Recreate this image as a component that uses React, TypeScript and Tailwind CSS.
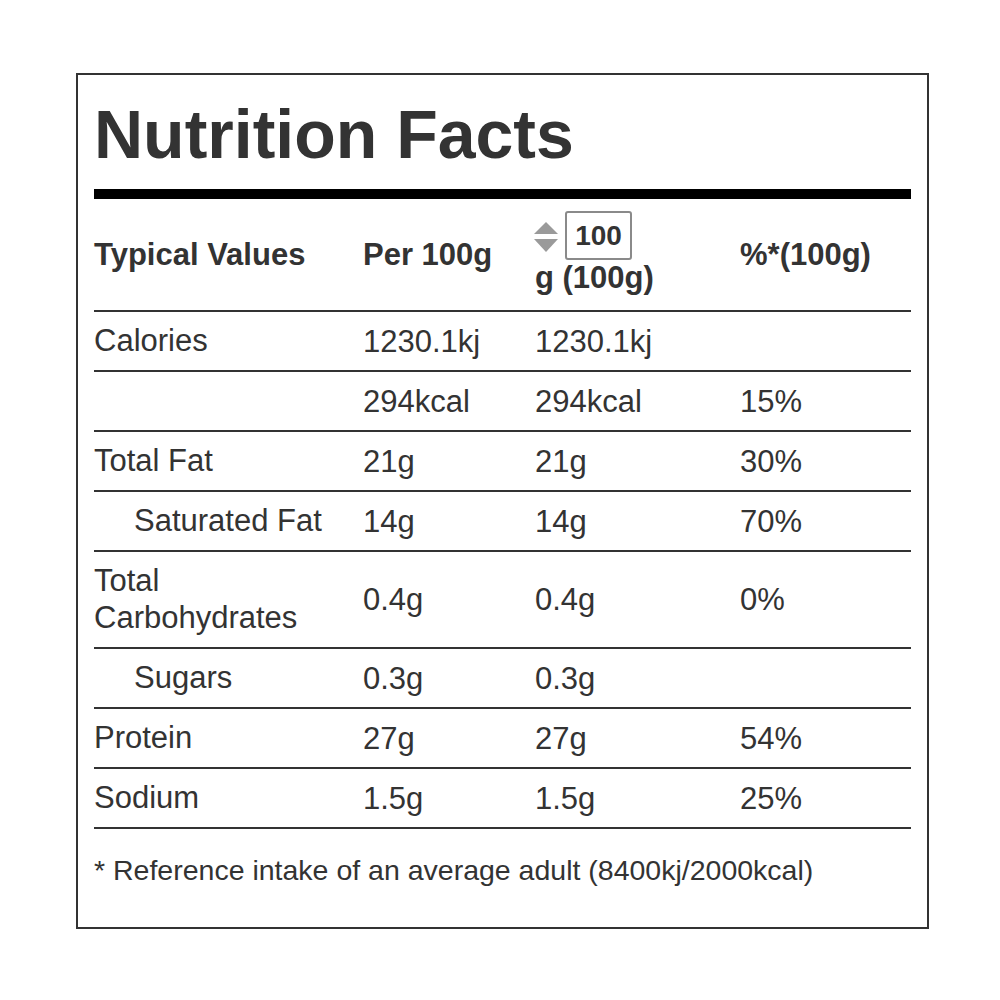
import React from 'react'

interface Row {
  name: string
  per100: string
  serving: string
  pct: string
  indent?: boolean
  tall?: boolean
}

const rows: Row[] = [
  { name: 'Calories', per100: '1230.1kj', serving: '1230.1kj', pct: '' },
  { name: '', per100: '294kcal', serving: '294kcal', pct: '15%' },
  { name: 'Total Fat', per100: '21g', serving: '21g', pct: '30%' },
  { name: 'Saturated Fat', per100: '14g', serving: '14g', pct: '70%', indent: true },
  { name: 'Total Carbohydrates', per100: '0.4g', serving: '0.4g', pct: '0%', tall: true },
  { name: 'Sugars', per100: '0.3g', serving: '0.3g', pct: '', indent: true },
  { name: 'Protein', per100: '27g', serving: '27g', pct: '54%' },
  { name: 'Sodium', per100: '1.5g', serving: '1.5g', pct: '25%' },
]

const grid = 'grid grid-cols-[269px_172px_205px_172px]'

function Spinner() {
  return (
    <svg width="26" height="40" viewBox="0 0 26 40" className="mt-[5px] shrink-0">
      <polygon points="1,18 25,18 13,6" fill="#9a9a9a" />
      <polygon points="1,23 25,23 13,36" fill="#9a9a9a" />
    </svg>
  )
}

export default function App() {
  return (
    <div className="min-h-screen bg-white pt-[73px] pl-[76px]" style={{ fontFamily: '"Liberation Sans", Arial, sans-serif' }}>
      <div className="w-[853px] border-2 border-[#333] px-4 text-[#333]">
        <h1 className="pt-[25px] text-[68px] font-bold leading-none">Nutrition Facts</h1>
        <div className="mt-[21px] h-[10px] bg-black" />

        <div className={`${grid} border-b-2 border-[#333] text-[31px] font-bold leading-[36px]`}>
          <div className="flex h-[111px] items-center">Typical Values</div>
          <div className="flex h-[111px] items-center">Per 100g</div>
          <div className="flex h-[111px] flex-col pt-[12px]">
            <div className="-ml-[2px] flex items-start gap-[6px]">
              <Spinner />
              <div className="flex h-[49px] w-[67px] items-center justify-center rounded-[3px] border-2 border-[#8a8a8a] text-[28px]">
                100
              </div>
            </div>
            <div>g (100g)</div>
          </div>
          <div className="flex h-[111px] items-center">%*(100g)</div>
        </div>

        {rows.map((row, i) => (
          <div key={i} className={`${grid} border-b-2 border-[#333] text-[31px] leading-[37px]`}>
            <div className={`pt-[10px] pb-[11px] ${row.indent ? 'pl-10' : ''} ${row.tall ? 'w-[220px]' : ''}`}>
              {row.name || '\u00a0'}
            </div>
            <div className="flex items-center">{row.per100}</div>
            <div className="flex items-center">{row.serving}</div>
            <div className="flex items-center">{row.pct}</div>
          </div>
        ))}

        <p className="pt-[24px] pb-[40px] text-[28.5px] leading-[34px]">
          * Reference intake of an average adult (8400kj/2000kcal)
        </p>
      </div>
    </div>
  )
}
